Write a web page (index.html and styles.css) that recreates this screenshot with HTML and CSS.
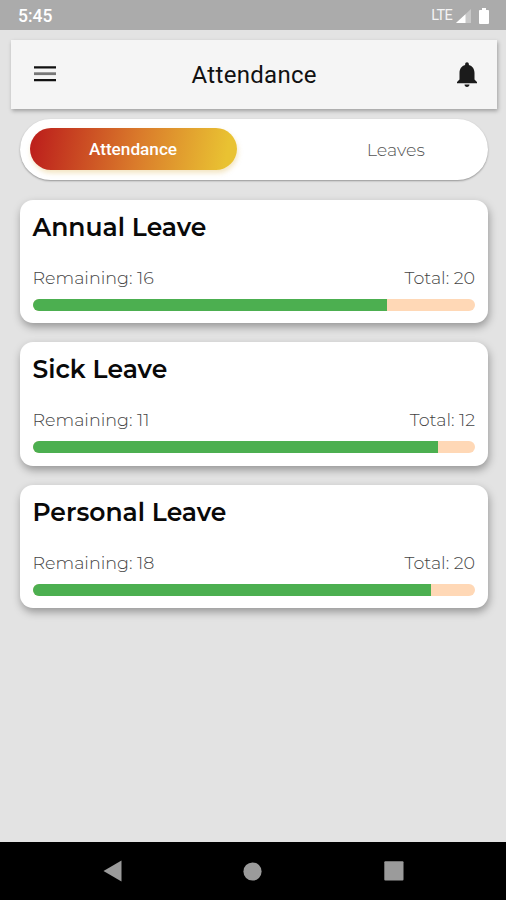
FILE: index.html
```
<!DOCTYPE html>
<html lang="en">
<head>
<meta charset="utf-8">
<title>Attendance</title>
<link rel="stylesheet" href="styles.css">
</head>
<body>
<div class="status">
  <span class="time">5:45</span>
  <span class="lte">LTE</span>
  <svg class="signal" width="15" height="14" viewBox="0 0 15 15" preserveAspectRatio="none"><path d="M0 15 15 0V15Z" fill="#c8c8c8"/><path d="M0 15 9.500 5.500V15Z" fill="#fff"/></svg>
  <svg class="battery" width="10" height="16" viewBox="0 0 10 17" preserveAspectRatio="none"><path d="M3 0H7V2H9Q10 2 10 3V16Q10 17 9 17H1Q0 17 0 16V3Q0 2 1 2H3Z" fill="#fff"/></svg>
</div>
<header class="bar">
  <svg class="menu" width="22" height="16" viewBox="0 0 22 16"><path d="M0 1.300H22M0 14.200H22" stroke="#111" stroke-width="2.200"/><path d="M0 7.700H22" stroke="#777" stroke-width="2.800"/></svg>
  <h1>Attendance</h1>
  <svg class="bell" width="20" height="25" viewBox="4 2.300 16 19.700" preserveAspectRatio="none"><path d="M12 22c1.100 0 2-.9 2-2h-4c0 1.100.9 2 2 2zm6-6v-5c0-3.070-1.640-5.640-4.500-6.320V4c0-.83-.67-1.500-1.500-1.500s-1.500.67-1.500 1.500v.68C7.630 5.360 6 7.920 6 11v5l-2 2v1h16v-1l-2-2z" fill="#1b1b1b"/></svg>
</header>
<nav class="tabs">
  <div class="tab active"><span>Attendance</span></div>
  <div class="tab"><span class="leaves">Leaves</span></div>
</nav>
<main>
  <section class="card">
    <h2>Annual Leave</h2>
    <div class="row"><span>Remaining: 16</span><span>Total: 20</span></div>
    <div class="track"><div class="fill" style="width:80%"></div></div>
  </section>
  <section class="card">
    <h2>Sick Leave</h2>
    <div class="row"><span>Remaining: 11</span><span>Total: 12</span></div>
    <div class="track"><div class="fill" style="width:91.670%"></div></div>
  </section>
  <section class="card">
    <h2>Personal Leave</h2>
    <div class="row"><span>Remaining: 18</span><span>Total: 20</span></div>
    <div class="track"><div class="fill" style="width:90%"></div></div>
  </section>
</main>
<footer class="nav">
  <svg width="19" height="22" viewBox="0 0 19 22"><path d="M.5 11 18.500.5V21.500Z" fill="#9b9b9b"/></svg>
  <svg width="19" height="19" viewBox="0 0 19 19"><circle cx="9.500" cy="9.500" r="9.100" fill="#9b9b9b"/></svg>
  <svg width="20" height="20" viewBox="0 0 20 20"><rect x=".3" y=".3" width="19.200" height="19.200" rx="1" fill="#9b9b9b"/></svg>
</footer>
</body>
</html>
```
FILE: styles.css
```
* { box-sizing: border-box; }
body {
  margin: 0;
  height: 900px;
  display: flex;
  flex-direction: column;
  overflow: hidden;
  background: #e3e3e3;
  font-family: Montserrat, Inter, sans-serif;
}
svg { display: block; flex: none; }
h1, h2 { margin: 0; }
.status {
  height: 30px;
  flex: none;
  display: flex;
  align-items: center;
  padding: 1px 17px 0 18px;
  background: #ababab;
  color: #fff;
  font-family: Roboto, sans-serif;
}
.time { font-size: 17.500px; font-weight: 500; margin-right: auto; }
.lte { font-size: 14.500px; letter-spacing: -.7px; color: #f4f4f4; margin-right: 4px; }
.signal { margin-right: 8px; }
.bar {
  height: 68.500px;
  flex: none;
  margin: 10px 9px 0 10.500px;
  padding: 0 20px 0 23px;
  display: flex;
  align-items: center;
  background: #f5f5f5;
  box-shadow: 1px 2px 4px rgba(0, 0, 0, .3);
}
h1 {
  flex: 1;
  text-align: center;
  font: 400 24px/28px Roboto, sans-serif;
  letter-spacing: .3px;
  padding-right: 4px;
  padding-top: 1px;
  color: #111;
}
.tabs {
  height: 61px;
  flex: none;
  margin: 10.500px 18.500px 0 20px;
  padding: 9px 10px 10.500px;
  display: flex;
  background: #fff;
  border-radius: 31px;
  box-shadow: 0 1px 2px rgba(0, 0, 0, .35);
}
.tab {
  flex: 1;
  display: flex;
  align-items: center;
  justify-content: center;
  font-size: 17.500px;
  color: #555;
}
.tab.active {
  flex: 0 0 207px;
  border-radius: 21px;
  background: linear-gradient(100deg, #bd211c 3%, #da7b2b 52%, #e9c232 94%);
  box-shadow: 1px 3px 5px rgba(220, 180, 80, .35);
  color: #fff;
  font: 500 17.200px Roboto, sans-serif;
}
.tab.active span { padding-right: 1px; }
.leaves { font-weight: 300; padding-left: 77px; padding-top: 1px; }
main {
  flex: 1;
  display: flex;
  flex-direction: column;
  gap: 19.500px;
  padding: 19.500px 18.500px 0 20px;
}
.card {
  height: 123.300px;
  padding: 12px 12.500px 0 12.500px;
  border-radius: 13px;
  background: #fff;
  box-shadow: 1px 4px 8px rgba(0, 0, 0, .34);
}
h2 { font-size: 25px; font-weight: 600; line-height: 30px; color: #090909; white-space: nowrap; }
.row {
  display: flex;
  justify-content: space-between;
  margin-top: 25px;
  font-size: 17.500px;
  font-weight: 300;
  line-height: 22px;
  color: #444;
}
.track {
  height: 12px;
  margin-top: 10px;
  border-radius: 6px;
  overflow: hidden;
  background: #ffd8b6;
}
.fill { height: 100%; background: #4caf50; }
.nav {
  height: 58px;
  flex: none;
  display: flex;
  align-items: center;
  justify-content: space-between;
  padding: 0 102.500px 0 103px;
  background: #000;
}
```
